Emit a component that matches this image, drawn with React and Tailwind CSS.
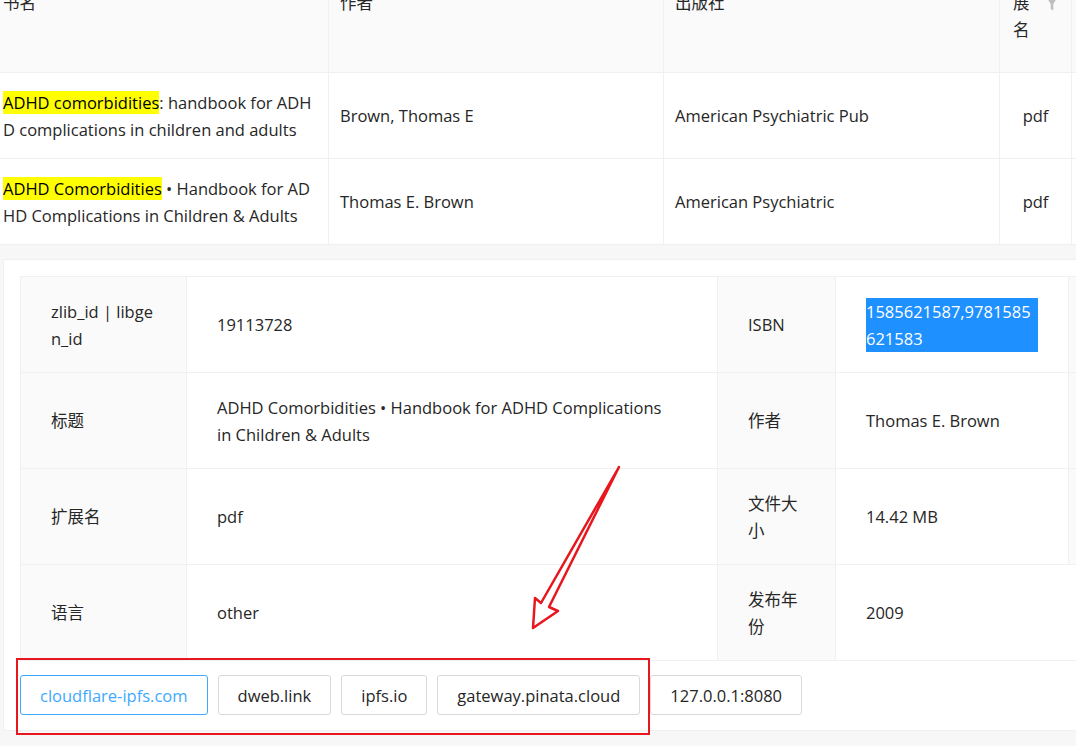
import React from "react";

const font = "font-['Open_Sans','Noto_Sans_CJK_SC',sans-serif]";

function Funnel() {
  return (
    <svg width="10" height="14" viewBox="0 0 10 14" className="shrink-0 translate-y-[3px]">
      <path d="M0 0 H10 L6.3 6 V12.5 L3.7 11 V6 Z" fill="#bfbfbf" />
    </svg>
  );
}

function TopTable() {
  const cell = "border-r border-b border-[#f0f0f0] flex items-center";
  const rows = [
    {
      hl: "ADHD comorbidities",
      rest: ": handbook for ADHD complications in children and adults",
      author: "Brown, Thomas E",
      pub: "American Psychiatric Pub",
      ext: "pdf",
    },
    {
      hl: "ADHD Comorbidities",
      rest: " • Handbook for ADHD Complications in Children & Adults",
      author: "Thomas E. Brown",
      pub: "American Psychiatric",
      ext: "pdf",
    },
  ];
  return (
    <div className="grid grid-cols-[329px_335px_336px_72px_1fr] mt-[-68px]">
      <div className={`${cell} h-[141px] bg-[#fafafa] pl-[3px]`}>书名</div>
      <div className={`${cell} h-[141px] bg-[#fafafa] px-[11px]`}>作者</div>
      <div className={`${cell} h-[141px] bg-[#fafafa] px-[11px]`}>出版社</div>
      <div className={`${cell} h-[141px] bg-[#fafafa] pl-[13px] gap-[7px]`}>
        <span className="w-[27px] break-all">扩展名</span>
        <Funnel />
      </div>
      <div className="h-[141px] bg-[#fafafa] border-b border-[#f0f0f0]"></div>
      {rows.map((r, i) => (
        <React.Fragment key={i}>
          <div className={`${cell} h-[86px] bg-white pl-[3px] pr-[10px]`}>
            <div className="break-all">
              <span className="bg-[#ffff00] text-black">{r.hl}</span>
              {r.rest}
            </div>
          </div>
          <div className={`${cell} h-[86px] bg-white px-[11px]`}>{r.author}</div>
          <div className={`${cell} h-[86px] bg-white px-[11px]`}>{r.pub}</div>
          <div className={`${cell} h-[86px] bg-white justify-center`}>{r.ext}</div>
          <div className="h-[86px] bg-white border-b border-[#f0f0f0]"></div>
        </React.Fragment>
      ))}
    </div>
  );
}

function DescTable() {
  const label = "bg-[#fafafa] border-r border-b border-[#f0f0f0] h-[96px] px-[30px] flex items-center break-all";
  const value = "bg-white border-r border-b border-[#f0f0f0] h-[96px] px-[30px] flex items-center";
  return (
    <div className="grid grid-cols-[166px_531px_118px_233px_1fr] border-t border-l border-[#f0f0f0]">
      <div className={label}>
        <span>zlib_id | libgen_id</span>
      </div>
      <div className={value}>19113728</div>
      <div className={label}>ISBN</div>
      <div className={`${value} break-all`}>
        <span className="bg-[#1e90ff] text-white">1585621587,9781585621583</span>
      </div>
      <div className={label}></div>

      <div className={label}>标题</div>
      <div className={`${value} pr-[42px]`}>
        <span>ADHD Comorbidities • Handbook for ADHD Complications in Children &amp; Adults</span>
      </div>
      <div className={label}>作者</div>
      <div className={value}>Thomas E. Brown</div>
      <div className={label}></div>

      <div className={label}>扩展名</div>
      <div className={value}>pdf</div>
      <div className={label}>
        <span>文件大小</span>
      </div>
      <div className={value}>14.42 MB</div>
      <div className={label}></div>

      <div className={label}>语言</div>
      <div className={value}>other</div>
      <div className={label}>
        <span>发布年份</span>
      </div>
      <div className={`${value} col-span-2 border-r-0`}>2009</div>
    </div>
  );
}

function Buttons() {
  const base = "h-[40px] px-[19px] border rounded-[3px] bg-white flex items-center";
  const items = ["dweb.link", "ipfs.io", "gateway.pinata.cloud", "127.0.0.1:8080"];
  return (
    <div className="flex gap-[10px] mt-[14px]">
      <button className={`${base} border-[#40a9ff] text-[#40a9ff]`}>cloudflare-ipfs.com</button>
      {items.map((t) => (
        <button key={t} className={`${base} border-[#d9d9d9] text-[#262626]`}>
          {t}
        </button>
      ))}
    </div>
  );
}

export default function App() {
  return (
    <div
      className={`${font} relative w-[1076px] h-[746px] overflow-hidden bg-[#f7f7f7] text-[#262626] text-[16.5px] leading-[27px]`}
    >
      <TopTable />
      <div className="ml-[3px] mt-[14px] w-[1100px] bg-white border border-[#f0f0f0] rounded-[2px] pt-[16px] pl-[16px] pb-[15px]">
        <DescTable />
        <Buttons />
      </div>

      <div className="absolute left-[16px] top-[658px] w-[634px] h-[77px] border-2 border-[#e8161d] pointer-events-none"></div>
      <svg
        className="absolute left-0 top-0 pointer-events-none"
        width="1076"
        height="746"
        viewBox="0 0 1076 746"
      >
        <polygon
          points="619,467 549,607 558,611 533,628 535,598 541,603"
          fill="none"
          stroke="#e8161d"
          strokeWidth="2.5"
          strokeLinejoin="round"
        />
      </svg>
    </div>
  );
}
